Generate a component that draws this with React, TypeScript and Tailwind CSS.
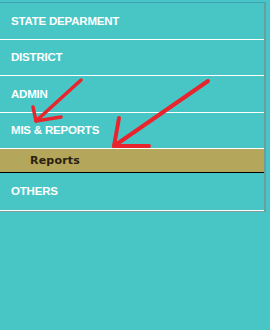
import React from "react";

const rows: { label: string; h: string }[] = [
  { label: "STATE DEPARMENT", h: "h-[37px]" },
  { label: "DISTRICT", h: "h-[36px]" },
  { label: "ADMIN", h: "h-[37px]" },
  { label: "MIS & REPORTS", h: "h-[36px]" },
];

export default function App() {
  return (
    <div className="relative w-[270px] h-[330px] bg-[#48c6c6] overflow-hidden pt-[2px]">
      <div className="w-[266px] border-t border-r-2 border-t-[#3e9fb6] border-r-[#6a9da2] border-b border-b-[#7c9ea0]">
        {rows.map((r) => (
          <div
            key={r.label}
            className={`${r.h} flex items-center pl-[11px] pt-[1px] border-b border-white text-white font-bold text-[11.5px] tracking-[-0.2px] [font-family:'Liberation_Sans',Arial,sans-serif]`}
          >
            {r.label}
          </div>
        ))}
        <div className="h-[24px] flex items-center pl-[30px] pt-[2px] bg-[#b4a65b] border-b border-black text-[#2a2010] font-bold text-[11px] tracking-[0.2px] [font-family:'DejaVu_Sans',Verdana,sans-serif]">
          Reports
        </div>
        <div className="h-[38px] flex items-center pl-[11px] pt-[1px] border-b border-white text-white font-bold text-[11.5px] tracking-[-0.2px] [font-family:'Liberation_Sans',Arial,sans-serif]">
          OTHERS
        </div>
      </div>
      <svg
        className="absolute left-0 top-0 pointer-events-none"
        width="270"
        height="330"
        viewBox="0 0 270 330"
      >
        <g stroke="#e8242c" strokeWidth="3.5" strokeLinecap="round" strokeLinejoin="round" fill="none">
          <path d="M81 80 L36 121" />
          <path d="M33 107 L36 121 L61 117" />
        </g>
        <g stroke="#e8242c" strokeWidth="4" strokeLinecap="round" strokeLinejoin="round" fill="none">
          <path d="M208 81 L114 146" />
          <path d="M119 118 L114 146 L149 146" />
        </g>
      </svg>
    </div>
  );
}
